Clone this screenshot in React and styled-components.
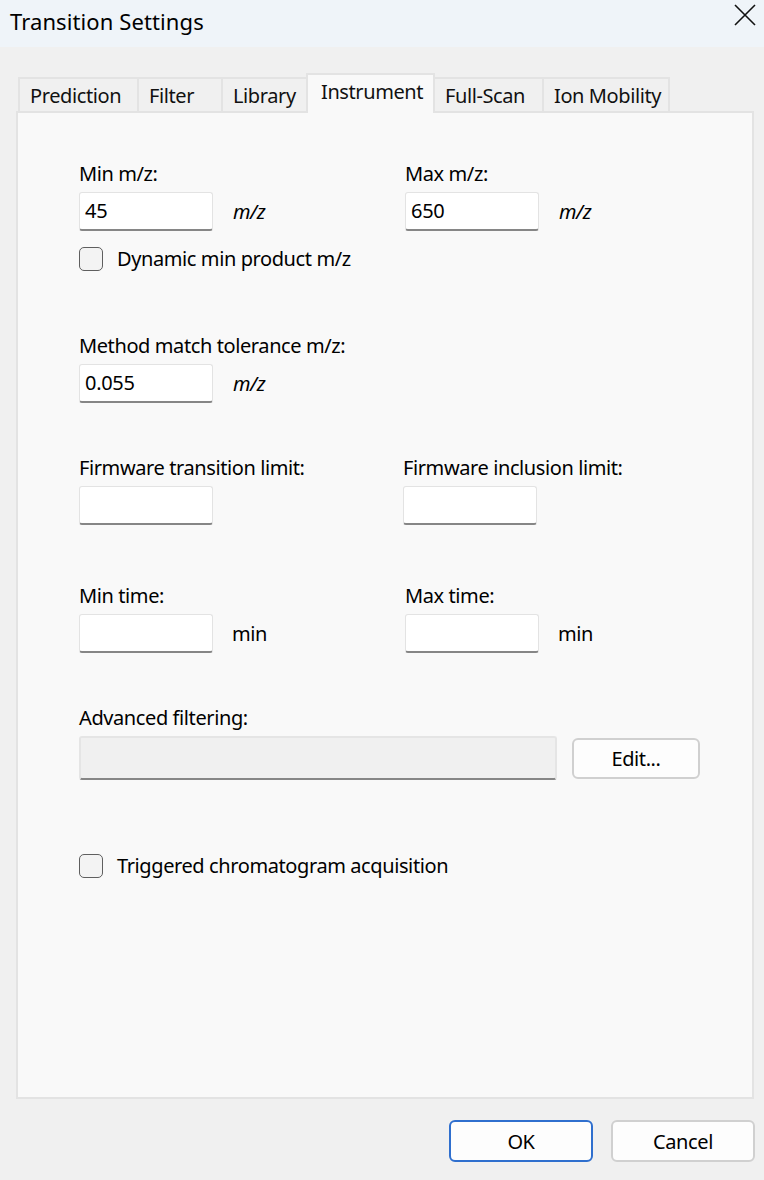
import React from 'react';
import styled, { createGlobalStyle } from 'styled-components';

const GlobalStyle = createGlobalStyle`
  html, body {
    margin: 0;
    padding: 0;
    background: #f0f0f0;
  }
  body {
    font-family: "Noto Sans", "Open Sans", "Liberation Sans", sans-serif;
    color: #000;
  }
`;

const Window = styled.div`
  width: 764px;
  height: 1180px;
  background: #f0f0f0;
  display: flex;
  flex-direction: column;
  overflow: hidden;
`;

const TitleBar = styled.div`
  height: 47px;
  background: #eff4f9;
  display: flex;
  align-items: center;
  justify-content: space-between;
  padding: 0 6px 6px 10px;
  box-sizing: border-box;
`;

const Title = styled.div`
  font-size: 22px;
  letter-spacing: 0.1px;
`;

const CloseButton = styled.div`
  width: 26px;
  height: 26px;
  display: flex;
  align-items: center;
  justify-content: center;
  margin-top: -12px;
`;

const Body = styled.div`
  flex: 1;
  display: flex;
  flex-direction: column;
  padding: 26px 9px 0 16px;
`;

const TabStrip = styled.div`
  display: flex;
  align-items: flex-end;
  height: 40px;
  padding-left: 4px;
  position: relative;
  z-index: 1;
  margin-bottom: -2px;
`;

const Tab = styled.div`
  box-sizing: border-box;
  width: ${p => p.w}px;
  height: ${p => (p.active ? 40 : 36)}px;
  background: ${p => (p.active ? '#f9f9f9' : '#f0f0f0')};
  border: 2px solid #e3e3e3;
  border-bottom: ${p => (p.active ? 'none' : '2px solid #e3e3e3')};
  margin-left: -2px;
  font-size: 20px;
  letter-spacing: -0.4px;
  color: #111;
  display: flex;
  align-items: ${p => (p.active ? 'flex-start' : 'center')};
  padding: ${p => (p.active ? '3px 0 0 13px' : '0 0 0 10px')};
`;

const Panel = styled.div`
  box-sizing: border-box;
  width: 738px;
  height: 988px;
  background: #f9f9f9;
  border: 2px solid #e3e3e3;
  padding: 49px 0 0 61px;
  display: flex;
  flex-direction: column;
`;

const Row = styled.div`
  display: grid;
  grid-template-columns: ${p => p.cols || '326px 326px'};
  margin-top: ${p => p.top || 0}px;
`;

const Field = styled.div`
  display: flex;
  flex-direction: column;
  margin-left: ${p => p.shift || 0}px;
`;

const Label = styled.div`
  font-size: 20px;
  letter-spacing: -0.4px;
  line-height: 24px;
  height: 24px;
  margin-bottom: 6px;
`;

const InputLine = styled.div`
  display: flex;
  align-items: center;
`;

const TextBox = styled.div`
  box-sizing: border-box;
  width: 134px;
  height: 39px;
  background: #fff;
  border: 1px solid #e3e3e3;
  border-bottom: 2px solid #868686;
  border-radius: 3px;
  font-size: 20px;
  letter-spacing: -0.3px;
  padding: 4px 5px;
  line-height: 28px;
`;

const Unit = styled.span`
  font-size: 20px;
  font-style: ${p => (p.italic ? 'italic' : 'normal')};
  margin-left: ${p => (p.italic ? 20 : 19)}px;
  letter-spacing: -0.4px;
`;

const CheckRow = styled.label`
  display: flex;
  align-items: center;
  height: 24px;
  line-height: 24px;
  margin-top: ${p => p.top}px;
  font-size: 20px;
  letter-spacing: -0.4px;
`;

const CheckBox = styled.span`
  box-sizing: border-box;
  width: 24px;
  height: 24px;
  border: 1.5px solid #5f5f5f;
  border-radius: 5px;
  background: #f3f3f3;
  margin-right: 14px;
`;

const FilterLine = styled.div`
  display: flex;
  align-items: center;
  gap: 15px;
`;

const DisabledBox = styled.div`
  box-sizing: border-box;
  width: 478px;
  height: 44px;
  background: #f0f0f0;
  border: 2px solid #e5e5e5;
  border-bottom: 2px solid #868686;
  border-radius: 3px;
`;

const Button = styled.button`
  box-sizing: border-box;
  width: ${p => p.w || 144}px;
  height: ${p => p.h || 42}px;
  background: #fdfdfd;
  border: ${p => (p.primary ? '2px solid #2f6fce' : '2px solid #d0d0d0')};
  border-radius: 6px;
  font-family: inherit;
  font-size: 20px;
  letter-spacing: -0.4px;
  color: #000;
  padding: 0;
`;

const Footer = styled.div`
  display: flex;
  justify-content: flex-end;
  gap: 18px;
  padding: 21px 0 0 0;
`;

const Labeled = ({ label, value, unit, italic, shift }) => (
  <Field shift={shift}>
    <Label>{label}</Label>
    <InputLine>
      <TextBox>{value}</TextBox>
      {unit && <Unit italic={italic}>{unit}</Unit>}
    </InputLine>
  </Field>
);

const tabs = [
  { name: 'Prediction', w: 121 },
  { name: 'Filter', w: 86 },
  { name: 'Library', w: 87 },
  { name: 'Instrument', w: 129, active: true },
  { name: 'Full-Scan', w: 111 },
  { name: 'Ion Mobility', w: 128 },
];

export default function App() {
  return (
    <Window>
      <GlobalStyle />
      <TitleBar>
        <Title>Transition Settings</Title>
        <CloseButton>
          <svg width="22" height="22" viewBox="0 0 22 22">
            <path d="M1 1 L21 21 M21 1 L1 21" stroke="#111" strokeWidth="1.6" fill="none" />
          </svg>
        </CloseButton>
      </TitleBar>
      <Body>
        <TabStrip>
          {tabs.map(t => (
            <Tab key={t.name} w={t.w} active={t.active}>{t.name}</Tab>
          ))}
        </TabStrip>
        <Panel>
          <Row>
            <Labeled label="Min m/z:" value="45" unit="m/z" italic />
            <Labeled label="Max m/z:" value="650" unit="m/z" italic />
          </Row>
          <CheckRow top={16}>
            <CheckBox />
            Dynamic min product m/z
          </CheckRow>
          <Row top={63}>
            <Labeled label="Method match tolerance m/z:" value="0.055" unit="m/z" italic />
          </Row>
          <Row top={53}>
            <Labeled label="Firmware transition limit:" value="" />
            <Labeled label="Firmware inclusion limit:" value="" shift={-2} />
          </Row>
          <Row top={59}>
            <Labeled label="Min time:" value="" unit="min" />
            <Labeled label="Max time:" value="" unit="min" />
          </Row>
          <Row top={53} cols="auto">
            <Field>
              <Label>Advanced filtering:</Label>
              <FilterLine>
                <DisabledBox />
                <Button w={128} h={41}>Edit...</Button>
              </FilterLine>
            </Field>
          </Row>
          <CheckRow top={74}>
            <CheckBox />
            Triggered chromatogram acquisition
          </CheckRow>
        </Panel>
        <Footer>
          <Button primary>OK</Button>
          <Button>Cancel</Button>
        </Footer>
      </Body>
    </Window>
  );
}
